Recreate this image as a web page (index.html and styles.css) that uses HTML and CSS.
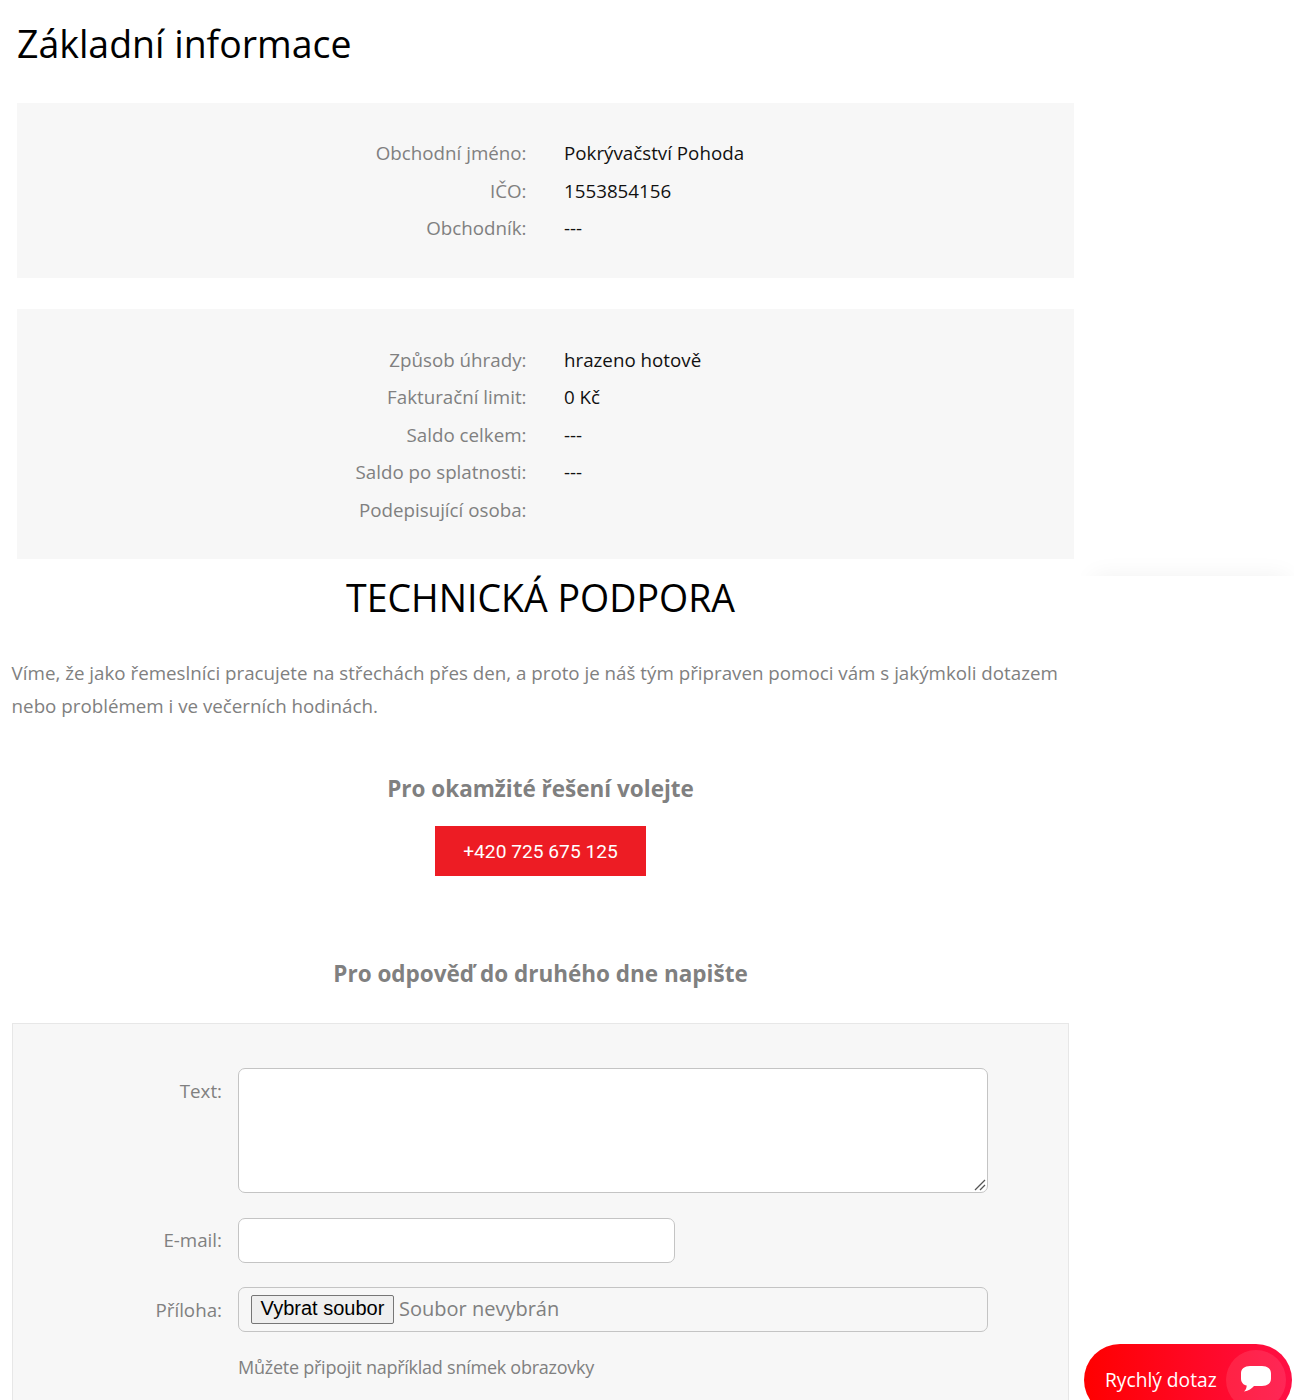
FILE: index.html
```
<!DOCTYPE html>
<html lang="cs">
<head>
<meta charset="utf-8">
<title>Základní informace</title>
<link rel="stylesheet" href="styles.css">
</head>
<body>
<div class="page">
  <main class="main">
    <section class="basic">
      <h1 class="title">Základní informace</h1>
      <dl class="info info-first">
        <div class="row"><dt>Obchodní jméno:</dt><dd>Pokrývačství Pohoda</dd></div>
        <div class="row"><dt>IČO:</dt><dd>1553854156</dd></div>
        <div class="row"><dt>Obchodník:</dt><dd>---</dd></div>
      </dl>
      <dl class="info">
        <div class="row"><dt>Způsob úhrady:</dt><dd>hrazeno hotově</dd></div>
        <div class="row"><dt>Fakturační limit:</dt><dd>0 Kč</dd></div>
        <div class="row"><dt>Saldo celkem:</dt><dd>---</dd></div>
        <div class="row"><dt>Saldo po splatnosti:</dt><dd>---</dd></div>
        <div class="row"><dt>Podepisující osoba:</dt><dd></dd></div>
      </dl>
    </section>
    <section class="support">
      <h2 class="support-title">TECHNICKÁ PODPORA</h2>
      <p class="lead">Víme, že jako řemeslníci pracujete na střechách přes den, a proto je náš tým připraven pomoci vám s jakýmkoli dotazem nebo problémem i ve večerních hodinách.</p>
      <h3 class="sub sub-call">Pro okamžité řešení volejte</h3>
      <div class="call-wrap"><a class="call" href="#">+420 725 675 125</a></div>
      <h3 class="sub sub-write">Pro odpověď do druhého dne napište</h3>
      <form class="form">
        <div class="field field-text">
          <label class="label" for="t">Text:</label>
          <div class="textarea-wrap">
            <textarea class="input textarea" id="t"></textarea>
            <svg class="grip" width="12" height="12" viewBox="0 0 12 12"><path fill="none" stroke="#555" stroke-width="1.300" d="M1 11 11 1M6 11l5-5"/></svg>
          </div>
        </div>
        <div class="field field-email">
          <label class="label" for="e">E-mail:</label>
          <input class="input email" id="e" type="text">
        </div>
        <div class="field field-file">
          <label class="label" for="f">Příloha:</label>
          <div class="input file" id="f"><button class="file-btn" type="button">Vybrat soubor</button><span class="file-name">Soubor nevybrán</span></div>
        </div>
        <p class="hint">Můžete připojit například snímek obrazovky</p>
      </form>
    </section>
  </main>
  <aside class="side"><div class="side-shadow"></div></aside>
</div>
<a class="chat" href="#">
  <span class="chat-text">Rychlý dotaz</span>
  <span class="chat-icon">
    <svg class="bubble" width="30" height="26" viewBox="0 0 30 26"><path fill="#fff" d="M9 0h12c5.500 0 9 2.800 9 7.500v5c0 4.700-3.500 7.500-9 7.500h-8c-2 2.700-5.500 4.600-10 5.500 1.800-1.500 2.600-3.200 2.700-5.900C2.500 19 0 16.500 0 12.500v-5C0 2.800 3.500 0 9 0z"/></svg>
  </span>
</a>
</body>
</html>
```
FILE: styles.css
```
* { box-sizing: border-box; }
html, body { margin: 0; padding: 0; height: 1400px; overflow: hidden; background: #fff; }
body { font-family: "Open Sans", sans-serif; color: #000; }
.page { display: flex; height: 1400px; overflow: hidden; }
.main { width: 1081px; flex: none; }
.basic { padding: 0 7px 0 17px; }
.title { margin: 0; padding-top: 19px; height: 103px; font-size: 37.45px; line-height: 50px; font-weight: 400; color: #000; }
.info { margin: 0; padding: 31.25px 0; background: #f7f7f7; font-size: 18.75px; line-height: 37.5px; }
.info-first { margin-bottom: 31.25px; }
.row { display: flex; min-height: 37.5px; }
.row dt { width: 509.5px; flex: none; text-align: right; color: #808080; }
.row dd { margin: 0 0 0 37.5px; color: #111; }
.support { padding: 0 12px; }
.support-title { margin: 0; padding-top: 14px; height: 96.75px; font-size: 37.5px; line-height: 50px; font-weight: 400; text-align: center; color: #000; }
.lead { margin: 0 0 0 -0.4px; font-size: 18.75px; line-height: 33px; color: #808080; }
.sub { margin: 0; text-align: center; font-size: 22.5px; line-height: 30px; font-weight: 700; color: #808080; }
.sub-call { margin-top: 52px; }
.call-wrap { display: flex; justify-content: center; margin-top: 22px; }
.call { display: block; width: 211px; height: 50px; padding-top: 1px; background: #ed1c24; color: #fff; text-decoration: none; text-align: center; font-family: Roboto, sans-serif; font-size: 19.2px; line-height: 50px; }
.sub-write { margin-top: 83px; }
.form { margin-top: 34px; height: 500px; padding: 44px 0 0 0; background: #f7f7f7; border: 1px solid #e7e7e7; }
.field { display: flex; }
.label { width: 209px; flex: none; margin-right: 16px; text-align: right; font-size: 18.75px; line-height: 25px; color: #808080; }
.input { display: block; margin: 0; border: 1px solid #c4c4c4; border-radius: 7px; background: #fff; font-family: "Open Sans", sans-serif; }
.field-text .label { padding-top: 10px; }
.textarea-wrap { position: relative; width: 750px; height: 125px; }
.textarea { width: 750px; height: 125px; resize: none; }
.grip { position: absolute; right: 2px; bottom: 2px; pointer-events: none; }
.field-email { margin-top: 25px; }
.field-email .label { padding-top: 9px; }
.email { width: 437px; height: 45px; }
.field-file { margin-top: 24px; }
.field-file .label { padding-top: 10px; }
.file { width: 750px; height: 45px; background: #f7f7f7; display: flex; align-items: center; padding-left: 12px; }
.file-btn { width: 143px; height: 29px; margin: 0 5px 0 0; padding: 0 0 2px; border: 1px solid #767676; border-radius: 2px; background: #efefef; font-family: "Liberation Sans", Arial, sans-serif; font-size: 20px; color: #000; }
.file-name { padding-bottom: 2px; font-size: 20px; color: #808080; }
.hint { margin: 23px 0 0 225px; font-size: 18px; line-height: 25px; letter-spacing: -0.25px; color: #808080; }
.side { flex: 1; height: 576px; overflow: hidden; }
.side-shadow { margin: 576px 6px 0 12px; height: 40px; box-shadow: 0 0 25px rgba(0,0,0,0.06); }
.chat { position: fixed; left: 1084px; top: 1344px; width: 208px; height: 72px; display: flex; align-items: center; border-radius: 36px; background: linear-gradient(90deg, #ff0000, #ff0f45); text-decoration: none; color: #fff; }
.chat-text { margin-left: 21px; font-size: 19.2px; line-height: 26px; white-space: nowrap; }
.chat-icon { position: absolute; left: 142px; top: 6px; width: 60px; height: 60px; border-radius: 50%; background: rgba(255,255,255,0.1); display: flex; align-items: center; justify-content: center; }
.bubble { margin-bottom: 2px; }
```
